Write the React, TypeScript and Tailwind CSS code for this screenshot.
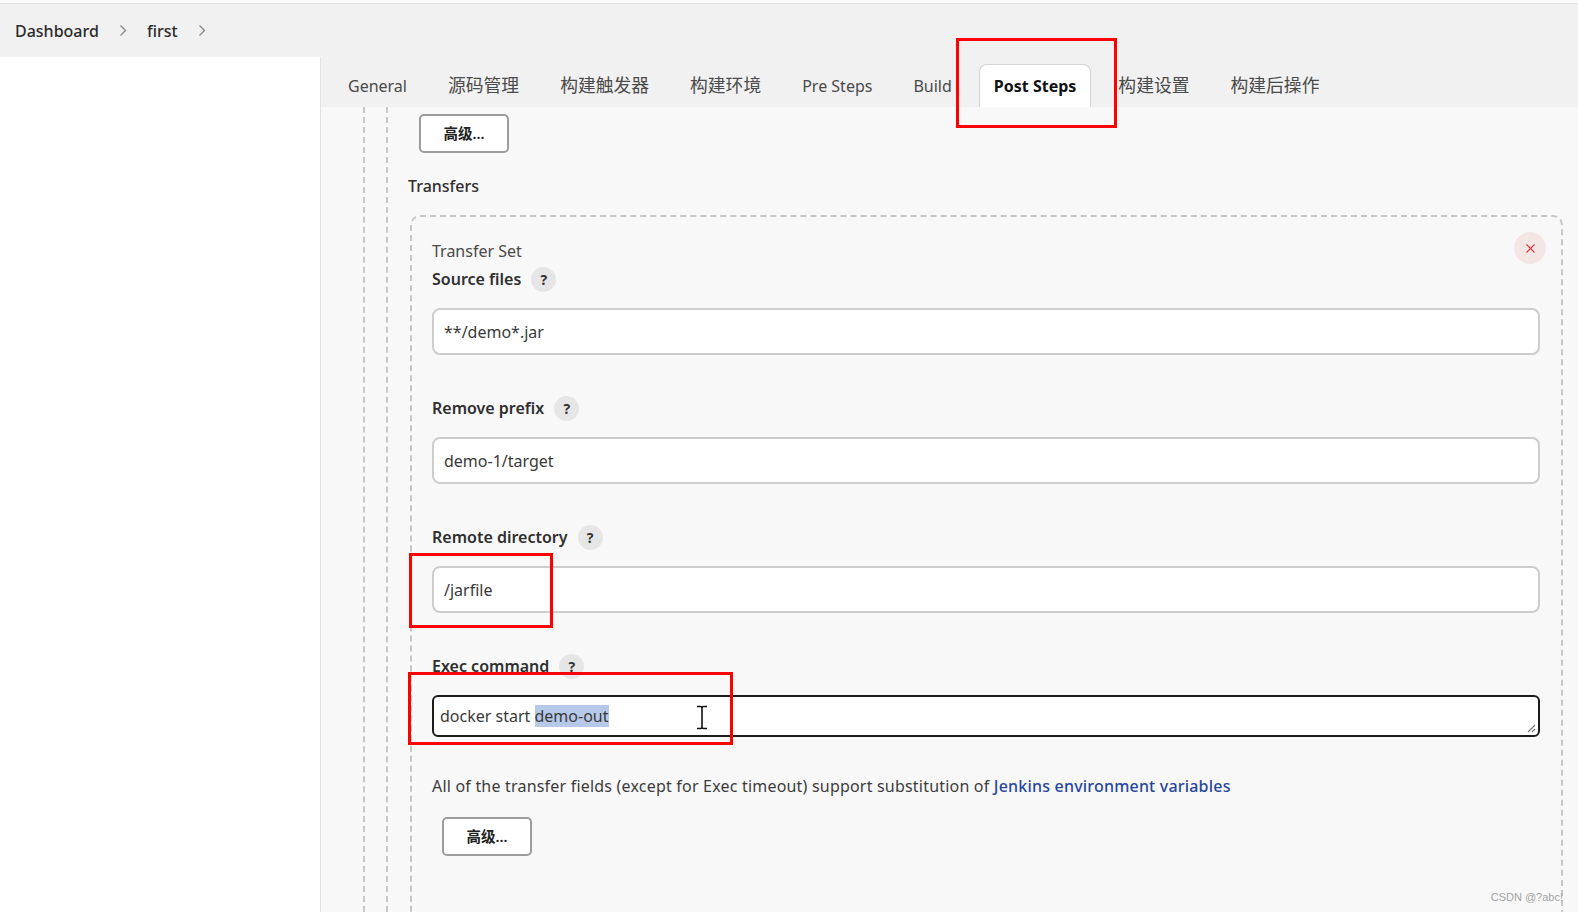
import { X } from 'lucide-react';

const Chevron = () => (
  <svg width="8" height="13" viewBox="0 0 8 13" fill="none" className="shrink-0">
    <path d="M1.5 1.5 L6.5 6.5 L1.5 11.5" stroke="#8a8a8a" strokeWidth="1.4" />
  </svg>
);

const Help = () => (
  <span className="ml-[10px] flex h-[25px] w-[25px] items-center justify-center rounded-full bg-[#e6e6e6] text-[14px] font-bold text-[#333]">
    ?
  </span>
);

const FieldLabel = ({ text, className = '' }: { text: string; className?: string }) => (
  <div className={`flex h-[24px] items-center ${className}`}>
    <span className="text-[16px] font-semibold text-[#2f2f2f]">{text}</span>
    <Help />
  </div>
);

const TextInput = ({ value }: { value: string }) => (
  <div className="mt-[17px] flex h-[47px] items-center rounded-[8px] border-2 border-[#cdcdcd] bg-white pl-[10px] text-[16px] text-[#3a3a3a]">
    {value}
  </div>
);

const AdvancedButton = ({ className = '' }: { className?: string }) => (
  <button className={`flex h-[39px] w-[90px] items-center justify-center rounded-[5px] border-2 border-[#9c9c9c] bg-white text-[14.5px] font-semibold text-[#222] ${className}`}>
    高级...
  </button>
);

const tabs = [
  { label: 'General', cjk: false },
  { label: '源码管理', cjk: true },
  { label: '构建触发器', cjk: true },
  { label: '构建环境', cjk: true },
  { label: 'Pre Steps', cjk: false },
  { label: 'Build', cjk: false },
  { label: 'Post Steps', cjk: false, active: true },
  { label: '构建设置', cjk: true },
  { label: '构建后操作', cjk: true },
];

export default function App() {
  return (
    <div className="relative h-[912px] w-[1578px] overflow-hidden bg-[#f8f8f8] font-['Noto_Sans','Noto_Sans_CJK_SC',sans-serif] text-[#333]">
      <div className="h-[4px] border-b border-[#e2e2e2] bg-[#fbfbfb]" />
      <header className="flex h-[53px] items-center bg-[#f1f1f1] pl-[15px] text-[16px] font-medium text-[#2b2b2b]">
        <span>Dashboard</span>
        <span className="mx-[20px]">
          <Chevron />
        </span>
        <span>first</span>
        <span className="ml-[20px]">
          <Chevron />
        </span>
      </header>

      <div className="flex h-[855px]">
        <aside className="w-[321px] shrink-0 border-r border-[#e2e2e2] bg-white" />

        <main className="flex min-h-0 flex-1 flex-col">
          <nav className="flex h-[50px] shrink-0 items-end gap-[13px] bg-[#f1f1f1] pl-[13px]">
            {tabs.map((t) => (
              <div
                key={t.label}
                className={
                  t.active
                    ? 'flex h-[43px] items-center rounded-t-[8px] border border-b-0 border-[#d4d4d4] bg-white px-[14px] text-[16px] font-bold text-[#111]'
                    : `flex h-[43px] items-center px-[14px] text-[#4a4a4a] ${t.cjk ? 'text-[17.8px]' : 'text-[16px]'}`
                }
              >
                {t.label}
              </div>
            ))}
          </nav>

          <div className="flex min-h-0 flex-1 pl-[42px]">
            <div className="flex flex-1 border-l-2 border-dashed border-[#c8c8c8] pl-[21px]">
              <div className="flex-1 border-l-2 border-dashed border-[#c8c8c8] pl-[20px]">
                <div className="pt-[7px]">
                  <AdvancedButton className="ml-[11px]" />
                  <div className="mt-[22px] text-[16px] font-medium leading-[22px] text-[#2f2f2f]">Transfers</div>

                  <div className="relative mt-[18px] ml-[2px] mr-[15px] rounded-t-[10px] border-2 border-b-0 border-dashed border-[#c6c6c6] pt-[23px] pr-[21px] pb-[80px] pl-[20px]">
                    <button className="absolute top-[15px] right-[15px] flex h-[32px] w-[32px] items-center justify-center rounded-full bg-[#f5e6e6]">
                      <X size={15} color="#d43c3c" strokeWidth={1.8} />
                    </button>

                    <div className="text-[16px] leading-[22px] text-[#4a4a4a]">Transfer Set</div>
                    <FieldLabel text="Source files" className="mt-[5px]" />
                    <TextInput value="**/demo*.jar" />

                    <FieldLabel text="Remove prefix" className="mt-[41px]" />
                    <TextInput value="demo-1/target" />

                    <FieldLabel text="Remote directory" className="mt-[41px]" />
                    <TextInput value="/jarfile" />

                    <FieldLabel text="Exec command" className="mt-[41px]" />
                    <div className="relative mt-[17px] flex h-[42px] items-center rounded-[6px] border-2 border-[#1c1c1c] bg-white pl-[6px] text-[16px] text-[#3a3a3a]">
                      <span className="whitespace-pre">docker start </span>
                      <span className="bg-[#b6c9e9] leading-[22px]">demo-out</span>
                      <svg className="absolute top-[8px] left-[262px]" width="12" height="25" viewBox="0 0 12 25" fill="none">
                        <path d="M1 1.5 H4.5 Q6 1.5 6 3 V22 Q6 23.5 7.5 23.5 H11 M11 1.5 H7.5 Q6 1.5 6 3 M6 22 Q6 23.5 4.5 23.5 H1" stroke="#111" strokeWidth="1.6" />
                      </svg>
                      <svg className="absolute right-[2px] bottom-[2px]" width="10" height="10" viewBox="0 0 10 10" fill="none">
                        <path d="M9 2 L2 9 M9 6 L6 9" stroke="#777" strokeWidth="1.2" />
                      </svg>
                    </div>

                    <p className="mt-[38px] text-[16px] leading-[22px] tracking-[0.2px] text-[#3c3c3c]">
                      All of the transfer fields (except for Exec timeout) support substitution of{' '}
                      <span className="font-medium text-[#26479e]">Jenkins environment variables</span>
                    </p>
                    <AdvancedButton className="mt-[20px] ml-[10px]" />
                  </div>
                </div>
              </div>
            </div>
          </div>
        </main>
      </div>

      {/* annotation boxes */}
      <div className="absolute top-[38px] left-[956px] h-[90px] w-[161px] border-[3px] border-[#ff0000]" />
      <div className="absolute top-[553px] left-[409px] h-[75px] w-[144px] border-[3px] border-[#ff0000]" />
      <div className="absolute top-[672px] left-[408px] h-[73px] w-[325px] border-[3px] border-[#ff0000]" />

      <div className="absolute right-[15px] bottom-[7px] font-['Liberation_Sans',sans-serif] text-[11px] text-[#a3a3a3]">
        CSDN @?abc!
      </div>
    </div>
  );
}
